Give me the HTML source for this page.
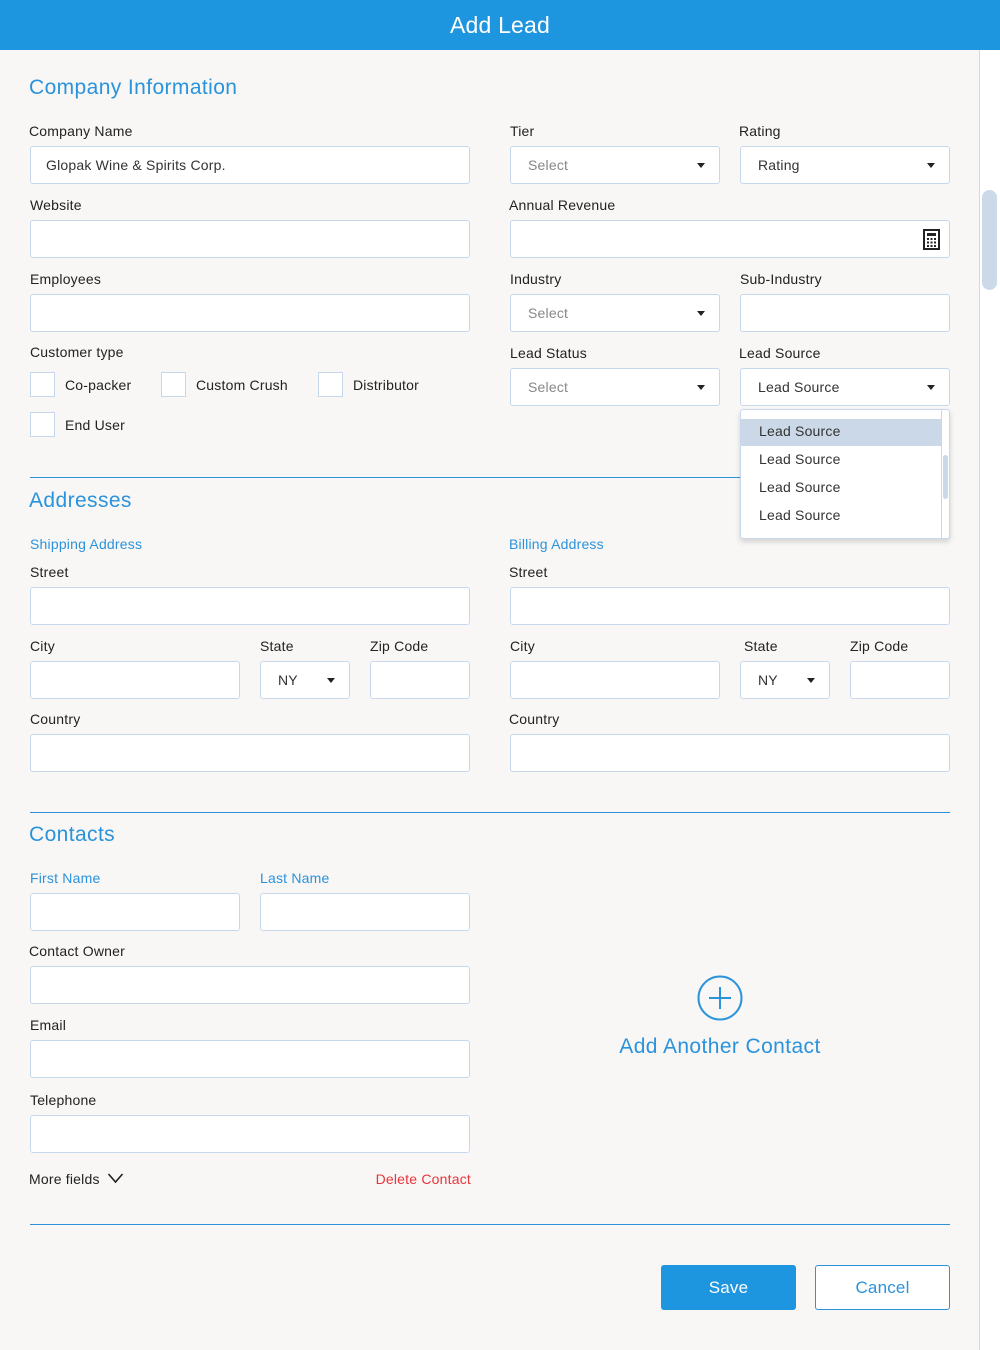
<!DOCTYPE html>
<html><head><meta charset="utf-8"><style>
*{box-sizing:border-box;margin:0;padding:0}
body{width:1000px;height:1350px;background:#f8f7f5;font-family:"Liberation Sans",sans-serif;position:relative;overflow:hidden;color:#222;letter-spacing:.2px}
.a{position:absolute}
.hd{left:0;top:0;width:1000px;height:50px;background:#1e96df;color:#fff;font-size:23px;text-align:center;line-height:50px}
.sb{left:979px;top:50px;width:21px;height:1300px;background:#fff;border-left:1px solid #d2d9e4}
.th{left:982px;top:190px;width:15px;height:100px;background:#cbd9e8;border-radius:8px}
.t{font-size:21px;color:#2a93dc;line-height:24px;letter-spacing:.4px}
.l{font-size:14px;line-height:18px;color:#222;white-space:nowrap}
.b{color:#2a93dc}
.i{background:#fff;border:1px solid #c8d8ec;border-radius:3px;height:38px}
.s{background:#fff;border:1px solid #c8d8ec;border-radius:3px;height:38px;font-size:14px;line-height:36px;padding-left:17px;color:#333}
.s.p{color:#888}
.s:after{content:"";position:absolute;right:14px;top:16px;border-left:4.5px solid transparent;border-right:4.5px solid transparent;border-top:5px solid #222}
.cb{width:25px;height:25px;background:#fff;border:1px solid #c8d8ec}
.hr{height:1px;background:#2a93dc;left:30px;width:920px}
</style></head><body>
<div class="a hd">Add Lead</div>
<div class="a sb"></div><div class="a th"></div>

<div class="a t" style="left:29px;top:76px">Company Information</div>
<div class="a l" style="left:29px;top:122px">Company Name</div>
<div class="a i" style="left:30px;top:146px;width:440px;font-size:14px;line-height:36px;padding-left:15px;color:#333">Glopak Wine &amp; Spirits Corp.</div>
<div class="a l" style="left:510px;top:122px">Tier</div>
<div class="a s p" style="left:510px;top:146px;width:210px">Select</div>
<div class="a l" style="left:739px;top:122px">Rating</div>
<div class="a s" style="left:740px;top:146px;width:210px">Rating</div>

<div class="a l" style="left:30px;top:196px">Website</div>
<div class="a i" style="left:30px;top:220px;width:440px"></div>
<div class="a l" style="left:509px;top:196px">Annual Revenue</div>
<div class="a i" style="left:510px;top:220px;width:440px"></div>
<svg class="a" style="left:923px;top:229px" width="17" height="21" viewBox="0 0 17 21"><rect x="1" y="1" width="15" height="19" fill="#fff" stroke="#222" stroke-width="2"/><rect x="4" y="4" width="9" height="3" fill="#222"/><g fill="#222"><rect x="4" y="9" width="2" height="2"/><rect x="7.5" y="9" width="2" height="2"/><rect x="11" y="9" width="2" height="2"/><rect x="4" y="12.5" width="2" height="2"/><rect x="7.5" y="12.5" width="2" height="2"/><rect x="11" y="12.5" width="2" height="2"/><rect x="4" y="16" width="2" height="2"/><rect x="7.5" y="16" width="2" height="2"/><rect x="11" y="16" width="2" height="2"/></g></svg>

<div class="a l" style="left:30px;top:270px">Employees</div>
<div class="a i" style="left:30px;top:294px;width:440px"></div>
<div class="a l" style="left:510px;top:270px">Industry</div>
<div class="a s p" style="left:510px;top:294px;width:210px">Select</div>
<div class="a l" style="left:740px;top:270px">Sub-Industry</div>
<div class="a i" style="left:740px;top:294px;width:210px"></div>

<div class="a l" style="left:30px;top:343px">Customer type</div>
<div class="a cb" style="left:30px;top:372px"></div><div class="a l" style="left:65px;top:376px">Co-packer</div>
<div class="a cb" style="left:161px;top:372px"></div><div class="a l" style="left:196px;top:376px">Custom Crush</div>
<div class="a cb" style="left:318px;top:372px"></div><div class="a l" style="left:353px;top:376px">Distributor</div>
<div class="a cb" style="left:30px;top:412px"></div><div class="a l" style="left:65px;top:416px">End User</div>

<div class="a l" style="left:510px;top:344px">Lead Status</div>
<div class="a s p" style="left:510px;top:368px;width:210px">Select</div>
<div class="a l" style="left:739px;top:344px">Lead Source</div>
<div class="a s" style="left:740px;top:368px;width:210px">Lead Source</div>

<div class="a hr" style="top:477px"></div>
<div class="a" style="left:740px;top:409px;width:210px;height:130px;background:#fff;border:1px solid #c8d8ec;border-radius:3px;box-shadow:0 3px 6px rgba(0,0,0,.15);font-size:14px;color:#333">
 <div style="position:absolute;left:0;top:9px;width:200px;height:27px;background:#cbd8e8"></div>
 <div style="position:absolute;left:200px;top:0;width:1px;height:128px;background:#c8d8ec"></div>
 <div style="position:absolute;left:202px;top:45px;width:5px;height:44px;background:#cbd8e8;border-radius:3px"></div>
 <div style="position:absolute;left:18px;top:13px">Lead Source</div>
 <div style="position:absolute;left:18px;top:41px">Lead Source</div>
 <div style="position:absolute;left:18px;top:69px">Lead Source</div>
 <div style="position:absolute;left:18px;top:97px">Lead Source</div>
</div>

<div class="a t" style="left:29px;top:489px">Addresses</div>
<div class="a l b" style="left:30px;top:535px">Shipping Address</div>
<div class="a l b" style="left:509px;top:535px">Billing Address</div>
<div class="a l" style="left:30px;top:563px">Street</div>
<div class="a i" style="left:30px;top:587px;width:440px"></div>
<div class="a l" style="left:509px;top:563px">Street</div>
<div class="a i" style="left:510px;top:587px;width:440px"></div>
<div class="a l" style="left:30px;top:637px">City</div>
<div class="a l" style="left:260px;top:637px">State</div>
<div class="a l" style="left:370px;top:637px">Zip Code</div>
<div class="a l" style="left:510px;top:637px">City</div>
<div class="a l" style="left:744px;top:637px">State</div>
<div class="a l" style="left:850px;top:637px">Zip Code</div>
<div class="a i" style="left:30px;top:661px;width:210px"></div>
<div class="a s" style="left:260px;top:661px;width:90px">NY</div>
<div class="a i" style="left:370px;top:661px;width:100px"></div>
<div class="a i" style="left:510px;top:661px;width:210px"></div>
<div class="a s" style="left:740px;top:661px;width:90px">NY</div>
<div class="a i" style="left:850px;top:661px;width:100px"></div>
<div class="a l" style="left:30px;top:710px">Country</div>
<div class="a i" style="left:30px;top:734px;width:440px"></div>
<div class="a l" style="left:509px;top:710px">Country</div>
<div class="a i" style="left:510px;top:734px;width:440px"></div>

<div class="a hr" style="top:812px"></div>
<div class="a t" style="left:29px;top:823px">Contacts</div>
<div class="a l b" style="left:30px;top:869px">First Name</div>
<div class="a l b" style="left:260px;top:869px">Last Name</div>
<div class="a i" style="left:30px;top:893px;width:210px"></div>
<div class="a i" style="left:260px;top:893px;width:210px"></div>
<div class="a l" style="left:29px;top:942px">Contact Owner</div>
<div class="a i" style="left:30px;top:966px;width:440px"></div>
<div class="a l" style="left:30px;top:1016px">Email</div>
<div class="a i" style="left:30px;top:1040px;width:440px"></div>
<div class="a l" style="left:30px;top:1091px">Telephone</div>
<div class="a i" style="left:30px;top:1115px;width:440px"></div>
<div class="a l" style="left:29px;top:1170px">More fields</div>
<svg class="a" style="left:107px;top:1172px" width="17" height="12" viewBox="0 0 17 12"><path d="M1.5 2 L8.5 10 L15.5 2" fill="none" stroke="#222" stroke-width="1.6"/></svg>
<div class="a l" style="left:300px;width:171px;text-align:right;top:1170px;color:#e8333a">Delete Contact</div>

<svg class="a" style="left:697px;top:975px" width="46" height="46" viewBox="0 0 46 46"><circle cx="23" cy="23" r="21.5" fill="none" stroke="#2a93dc" stroke-width="2"/><path d="M23 12V34M12 23H34" stroke="#2a93dc" stroke-width="2"/></svg>
<div class="a t" style="left:580px;width:280px;text-align:center;top:1035px">Add Another Contact</div>

<div class="a hr" style="top:1224px"></div>
<div class="a" style="left:661px;top:1265px;width:135px;height:45px;background:#1e96df;border-radius:3px;color:#fff;font-size:17px;text-align:center;line-height:45px">Save</div>
<div class="a" style="left:815px;top:1265px;width:135px;height:45px;background:#fff;border:1px solid #2a93dc;border-radius:3px;color:#2a93dc;font-size:17px;text-align:center;line-height:43px">Cancel</div>
</body></html>
